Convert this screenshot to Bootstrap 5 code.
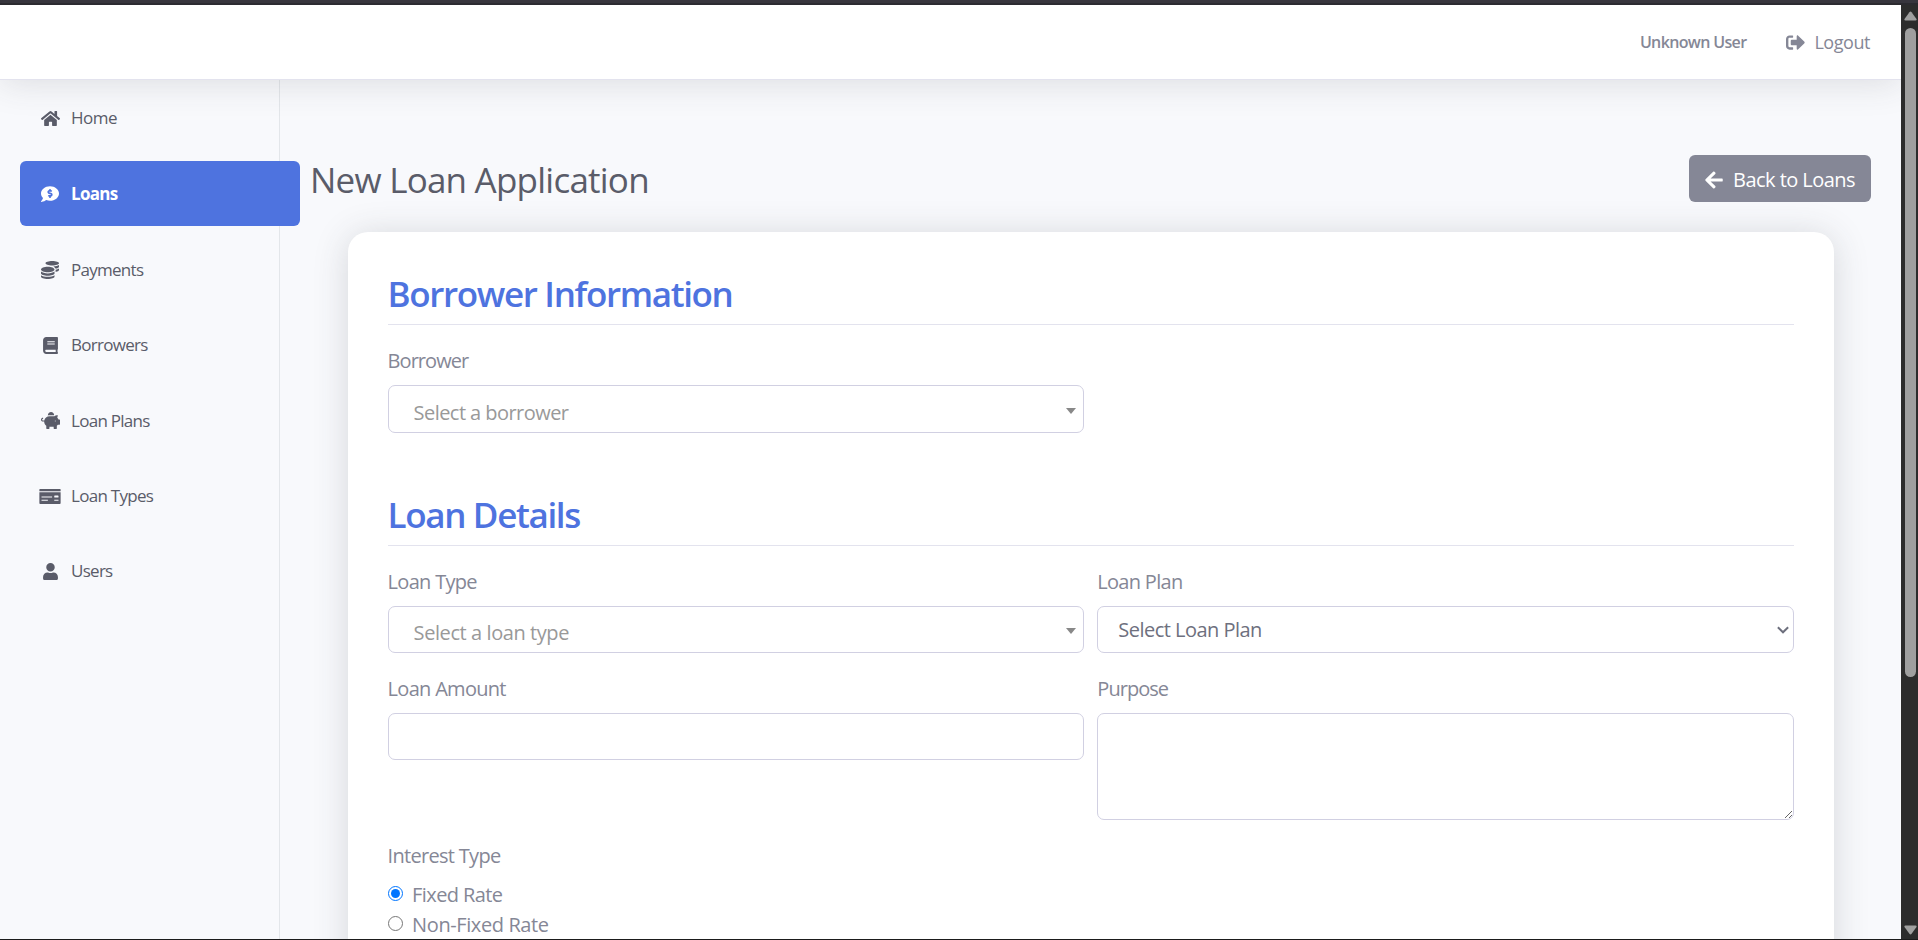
<!DOCTYPE html>
<html lang="en">
<head>
<meta charset="utf-8">
<title>New Loan Application</title>
<link href="https://cdn.jsdelivr.net/npm/bootstrap@5.3.0/dist/css/bootstrap.min.css" rel="stylesheet">
<style>
  body { height: 940px; overflow: hidden; background: #f8f9fc; color: #858796; font-family: "Segoe UI", "Open Sans", sans-serif; font-size: 20px; line-height: 30px; }
  .window { height: 940px; border-bottom: 1px solid #1b1b1b; }
  .frame-top { height: 5px; flex: none; background: #38363e; border-bottom: 2px solid #2c2b30; }
  .window-body { min-height: 0; }
  .topbar { height: 75px; flex: none; background: #fff; border-bottom: 1px solid #e3e3ee; box-shadow: 0 3px 35px rgba(58,59,69,.15); padding-right: 31px; z-index: 3; }
  .user-name { font-size: 16px; font-weight: 600; letter-spacing: -.65px; line-height: 24px; margin-right: 40px; }
  .logout { font-size: 18px; letter-spacing: -.45px; line-height: 26px; gap: 9px; color: inherit; text-decoration: none; }
  svg { display: block; flex: none; fill: currentColor; }
  .sidebar { width: 280px; flex: none; border-right: 1px solid #e3e6ea; padding: 5.4px 0 0 20px; z-index: 2; }
  .sidebar .nav-link { width: 280px; height: 65.4px; margin-bottom: 10.1px; padding: 1px 0 0 19px; border-radius: 6px; color: #5a5c69; font-size: 17px; letter-spacing: -.72px; }
  .sidebar .nav-link:first-child { padding-top: 0; letter-spacing: -.5px; }
  .sidebar .nav-link.active { background: #4e73df; color: #fff; font-weight: 700; }
  .icon-slot { width: 22px; margin-right: 10px; display: flex; justify-content: center; }
  .content-area { padding: 75px 30px 0 30px; min-width: 0; }
  .page-title { font-size: 35px; line-height: 42px; font-weight: 400; letter-spacing: -.77px; color: #5a5c69; margin: 2px 0 0; }
  .btn-back { height: 47px; background: #858796; color: #fff; border-radius: 6px; padding: 2px 16px 0; font-size: 20px; letter-spacing: -.55px; gap: 10px; border: 0; }
  .panel { margin: 30px 37px 0 37.6px; padding: 40px; height: 900px; background: #fff; border-radius: 20px; box-shadow: 0 3px 35px rgba(58,59,69,.18); }
  .section-title { font-size: 35px; line-height: 42px; font-weight: 600; letter-spacing: -1.35px; color: #4e73df; padding: 1px 0 9px; border-bottom: 1px solid #e3e3ee; margin: 0 0 20.4px; }
  .fields { --bs-gutter-x: 13px; }
  .borrower-row { margin-bottom: 40.6px; }
  .field-label { display: block; padding-top: .6px; margin-bottom: 9.4px; letter-spacing: -.7px; }
  .field { margin-bottom: 20px; }
  .form-control, .form-select, .picker { height: 47px; border: 1px solid #d1d0e2; border-radius: 7px; background-color: #fff; font-size: 20px; }
  .picker { color: #999; padding: 7px 7.500px 0 25px; letter-spacing: -.55px; }
  .borrower-row .picker { height: 48px; margin-bottom: -1px; }
  .loan-type { letter-spacing: -.42px; }
  .caret { border: 5px solid transparent; border-top: 6px solid #888; border-bottom: 0; margin-top: -4px; }
  .form-select { color: #6e707e; padding: 1px 30px 0 20px; letter-spacing: -.52px; background-size: 12px 8px; background-position: right 4px center; background-image: url("data:image/svg+xml,%3Csvg xmlns='http://www.w3.org/2000/svg' viewBox='0 0 11 7'%3E%3Cpath fill='none' stroke='%236e707e' stroke-width='1.800' d='M.8 1l4.700 4.600L10.200 1'/%3E%3C/svg%3E"); }
  textarea.form-control { height: 107px; resize: vertical; }
  .tight { letter-spacing: -.95px; }
  .radio-line { letter-spacing: -.6px; }
  .radio-line + .radio-line { letter-spacing: -.4px; }
  .radio-line input { width: 15px; height: 15px; margin: 0 9.500px 4.500px 0; accent-color: #0075ff; }
  .scroll-track { width: 17px; flex: none; background: #2c2c2c; padding: 6px 0 4px 1px; z-index: 4; }
  .scroll-track svg { color: #9f9f9f; }
  .scroll-thumb { width: 11px; height: 649px; border-radius: 6px; background: #9f9f9f; margin-top: 7px; }
</style>
</head>
<body>
<div class="window d-flex flex-column">
  <div class="frame-top"></div>
  <div class="window-body d-flex flex-grow-1">
    <div class="d-flex flex-column flex-grow-1">
      <header class="topbar d-flex align-items-center justify-content-end position-relative">
        <span class="user-name">Unknown User</span>
        <a class="logout d-flex align-items-center" href="#">
          <svg width="19" height="19" viewBox="0 0 512 512"><path d="M497 273L329 441c-15 15-41 4.5-41-17v-96H152c-13.3 0-24-10.7-24-24v-96c0-13.3 10.7-24 24-24h136V88c0-21.4 25.9-32 41-17l168 168c9.3 9.4 9.3 24.6 0 34zM192 436v-40c0-6.6-5.4-12-12-12H96c-17.7 0-32-14.3-32-32V160c0-17.7 14.3-32 32-32h84c6.6 0 12-5.4 12-12V76c0-6.6-5.4-12-12-12H96c-53 0-96 43-96 96v192c0 53 43 96 96 96h84c6.6 0 12-5.4 12-12z"/></svg>
          <span>Logout</span>
        </a>
      </header>
      <div class="window-body d-flex flex-grow-1">
        <nav class="sidebar nav flex-column flex-nowrap position-relative">
          <a class="nav-link d-flex align-items-center" href="#"><span class="icon-slot"><svg width="19" height="17" viewBox="0 0 576 512"><path d="M280.37 148.26L96 300.11V464a16 16 0 0 0 16 16l112.06-.29a16 16 0 0 0 15.92-16V368a16 16 0 0 1 16-16h64a16 16 0 0 1 16 16v95.64a16 16 0 0 0 16 16.05L464 480a16 16 0 0 0 16-16V300L295.67 148.26a12.19 12.19 0 0 0-15.3 0zM571.6 251.47L488 182.56V44.05a12 12 0 0 0-12-12h-56a12 12 0 0 0-12 12v72.61L318.47 43a48 48 0 0 0-61 0L4.34 251.47a12 12 0 0 0-1.6 16.9l25.5 31A12 12 0 0 0 45.15 301l235.22-193.74a12.19 12.19 0 0 1 15.3 0L530.9 301a12 12 0 0 0 16.9-1.6l25.5-31a12 12 0 0 0-1.7-16.93z"/></svg></span>Home</a>
          <a class="nav-link active d-flex align-items-center" href="#"><span class="icon-slot"><svg width="18" height="18" viewBox="0 0 512 512"><path d="M256 32C114.62 32 0 125.12 0 240c0 49.56 21.41 95.01 57.02 130.74C44.46 421.05 2.7 465.97 2.2 466.5A7.995 7.995 0 0 0 8 480c66.26 0 115.99-31.75 140.6-51.38C181.29 440.93 217.59 448 256 448c141.38 0 256-93.12 256-208S397.38 32 256 32zm24 302.44V352c0 8.84-7.16 16-16 16h-16c-8.84 0-16-7.16-16-16v-17.73c-11.42-1.35-22.28-5.19-31.78-11.46-6.22-4.11-6.82-13.11-1.55-18.38l17.52-17.52c3.74-3.74 9.31-4.24 14.11-2.03 3.18 1.46 6.66 2.22 10.26 2.22h32.78c4.66 0 8.44-3.78 8.44-8.42 0-3.75-2.52-7.08-6.12-8.11l-50.07-14.3c-22.25-6.35-40.01-24.71-42.91-47.67-4.05-32.07 19.03-59.43 49.32-63.05V128c0-8.84 7.16-16 16-16h16c8.84 0 16 7.16 16 16v17.73c11.42 1.35 22.28 5.19 31.78 11.46 6.22 4.11 6.82 13.11 1.55 18.38l-17.52 17.52c-3.74 3.74-9.31 4.24-14.11 2.03a24.516 24.516 0 0 0-10.26-2.22h-32.78c-4.66 0-8.44 3.78-8.44 8.42 0 3.75 2.52 7.08 6.12 8.11l50.07 14.3c22.25 6.36 40.01 24.71 42.91 47.67 4.05 32.06-19.03 59.42-49.32 63.04z"/></svg></span>Loans</a>
          <a class="nav-link d-flex align-items-center" href="#"><span class="icon-slot"><svg width="18" height="18" viewBox="0 0 512 512"><path d="M0 405.3V448c0 35.3 86 64 192 64s192-28.7 192-64v-42.7C342.7 434.4 267.2 448 192 448S41.3 434.4 0 405.3zM320 128c106 0 192-28.7 192-64S426 0 320 0 128 28.7 128 64s86 64 192 64zM0 300.4V352c0 35.3 86 64 192 64s192-28.7 192-64v-51.6c-41.3 34-116.9 51.6-192 51.6S41.3 334.4 0 300.4zm416 11c57.3-11.1 96-31.7 96-55.4v-42.7c-23.2 16.4-57.3 27.6-96 34.5v63.6zM192 160C86 160 0 195.8 0 240s86 80 192 80 192-35.8 192-80-86-80-192-80zm219.3 56.3c60-10.8 100.7-32 100.7-56.3v-42.7c-35.5 25.1-96.5 38.6-160.7 41.8 29.5 14.3 51.2 33.5 60 57.2z"/></svg></span>Payments</a>
          <a class="nav-link d-flex align-items-center" href="#"><span class="icon-slot"><svg width="15" height="17" viewBox="0 0 448 512"><path d="M448 360V24c0-13.3-10.7-24-24-24H96C43 0 0 43 0 96v320c0 53 43 96 96 96h328c13.3 0 24-10.7 24-24v-16c0-7.5-3.5-14.3-8.9-18.7-4.2-15.4-4.2-59.3 0-74.7 5.4-4.3 8.9-11.1 8.9-18.6zM128 134c0-3.3 2.7-6 6-6h212c3.3 0 6 2.7 6 6v20c0 3.3-2.7 6-6 6H134c-3.3 0-6-2.7-6-6v-20zm0 64c0-3.3 2.7-6 6-6h212c3.3 0 6 2.7 6 6v20c0 3.3-2.7 6-6 6H134c-3.3 0-6-2.7-6-6v-20zm253.4 250H96c-17.7 0-32-14.3-32-32 0-17.6 14.4-32 32-32h285.4c-1.9 17.1-1.9 46.9 0 64z"/></svg></span>Borrowers</a>
          <a class="nav-link d-flex align-items-center" href="#"><span class="icon-slot"><svg width="19" height="17" viewBox="0 0 576 512"><path d="M560 224h-29.5c-8.8-20-21.6-37.7-37.4-52.5L512 96h-32c-29.4 0-55.4 13.5-73 34.3-7.6-1.1-15.1-2.3-23-2.3H256c-77.4 0-141.9 55-156.8 128H56c-14.8 0-26.5-13.5-23.5-28.8C34.7 215.8 45.4 208 57 208h1c3.3 0 6-2.7 6-6v-20c0-3.3-2.7-6-6-6-28.5 0-53.9 20.4-57.5 48.6C-3.9 258.8 22.7 288 56 288h40c0 52.2 25.4 98.1 64 127.3V496c0 8.8 7.2 16 16 16h64c8.8 0 16-7.2 16-16v-48h128v48c0 8.8 7.2 16 16 16h64c8.8 0 16-7.2 16-16v-80.7c11.8-8.9 22.3-19.4 31.3-31.3H560c8.8 0 16-7.2 16-16V240c0-8.8-7.2-16-16-16zm-128 64c-8.8 0-16-7.2-16-16s7.2-16 16-16 16 7.2 16 16-7.2 16-16 16zM256 96h128c5.4 0 10.7.4 15.9.8 0-.3.1-.5.1-.8 0-53-43-96-96-96s-96 43-96 96c0 2.1.5 4.1.6 6.2 15.2-3.9 31-6.2 47.4-6.2z"/></svg></span>Loan Plans</a>
          <a class="nav-link d-flex align-items-center" href="#"><span class="icon-slot"><svg width="22" height="17" viewBox="0 0 640 512"><path d="M0 448c0 17.67 14.33 32 32 32h576c17.67 0 32-14.33 32-32V128H0v320zm448-208c0-8.84 7.16-16 16-16h96c8.84 0 16 7.16 16 16v32c0 8.84-7.16 16-16 16h-96c-8.84 0-16-7.16-16-16v-32zm0 120c0-4.42 3.58-8 8-8h112c4.42 0 8 3.58 8 8v16c0 4.42-3.58 8-8 8H456c-4.42 0-8-3.58-8-8v-16zM64 264c0-4.42 3.58-8 8-8h304c4.42 0 8 3.58 8 8v16c0 4.42-3.58 8-8 8H72c-4.42 0-8-3.58-8-8v-16zm0 96c0-4.42 3.58-8 8-8h176c4.42 0 8 3.58 8 8v16c0 4.42-3.58 8-8 8H72c-4.42 0-8-3.58-8-8v-16zM624 32H16C7.16 32 0 39.16 0 48v48h640V48c0-8.84-7.16-16-16-16z"/></svg></span>Loan Types</a>
          <a class="nav-link d-flex align-items-center" href="#"><span class="icon-slot"><svg width="15" height="17" viewBox="0 0 448 512"><path d="M224 256c70.7 0 128-57.3 128-128S294.7 0 224 0 96 57.3 96 128s57.3 128 128 128zm89.6 32h-16.7c-22.2 10.2-46.9 16-72.9 16s-50.6-5.8-72.9-16h-16.7C60.2 288 0 348.2 0 422.4V464c0 26.5 21.5 48 48 48h352c26.5 0 48-21.5 48-48v-41.6c0-74.2-60.2-134.4-134.4-134.4z"/></svg></span>Users</a>
        </nav>
        <main class="content-area flex-grow-1 overflow-hidden">
          <div class="d-flex align-items-center justify-content-between">
            <h1 class="page-title">New Loan Application</h1>
            <button class="btn btn-back d-flex align-items-center" type="button">
              <svg width="18" height="20" viewBox="0 0 448 512"><path d="M257.5 445.1l-22.2 22.2c-9.4 9.4-24.6 9.4-33.9 0L7 273c-9.4-9.4-9.4-24.6 0-33.9L201.4 44.7c9.4-9.4 24.6-9.4 33.9 0l22.2 22.2c9.5 9.5 9.3 25-.4 34.3L136.6 216H424c13.3 0 24 10.7 24 24v32c0 13.3-10.7 24-24 24H136.6l120.5 114.8c9.8 9.3 10 24.8.4 34.3z"/></svg>
              <span>Back to Loans</span>
            </button>
          </div>
          <form class="panel">
            <h2 class="section-title">Borrower Information</h2>
            <div class="row fields borrower-row">
              <div class="col-6 field">
                <label class="field-label tight">Borrower</label>
                <div class="picker d-flex align-items-center justify-content-between"><span>Select a borrower</span><i class="caret"></i></div>
              </div>
            </div>
            <h2 class="section-title">Loan Details</h2>
            <div class="row fields">
              <div class="col-6 field">
                <label class="field-label">Loan Type</label>
                <div class="picker d-flex align-items-center justify-content-between"><span class="loan-type">Select a loan type</span><i class="caret"></i></div>
              </div>
              <div class="col-6 field">
                <label class="field-label" for="plan">Loan Plan</label>
                <select class="form-select" id="plan"><option>Select Loan Plan</option></select>
              </div>
              <div class="col-6 field">
                <label class="field-label" for="amount">Loan Amount</label>
                <input class="form-control" id="amount" type="text">
              </div>
              <div class="col-6 field">
                <label class="field-label tight" for="purpose">Purpose</label>
                <textarea class="form-control" id="purpose"></textarea>
              </div>
            </div>
            <label class="field-label">Interest Type</label>
            <label class="radio-line d-flex align-items-center"><input type="radio" name="rate" checked>Fixed Rate</label>
            <label class="radio-line d-flex align-items-center"><input type="radio" name="rate">Non-Fixed Rate</label>
          </form>
        </main>
      </div>
    </div>
    <aside class="scroll-track d-flex flex-column align-items-center">
      <svg width="13" height="10" viewBox="0 0 13 10"><path d="M5.4 1.2q1.1-1.4 2.2 0l4.7 6.6q.9 1.7-.8 1.7H1.5q-1.7 0-.8-1.7z"/></svg>
      <div class="scroll-thumb"></div>
      <svg class="mt-auto" width="13" height="10" viewBox="0 0 13 10"><path d="M5.4 8.8q1.1 1.4 2.2 0l4.7-6.600q.9-1.700-.8-1.700H1.500q-1.700 0-.8 1.700z"/></svg>
    </aside>
  </div>
</div>
<script src="https://cdn.jsdelivr.net/npm/bootstrap@5.3.0/dist/js/bootstrap.bundle.min.js"></script>
</body>
</html>
